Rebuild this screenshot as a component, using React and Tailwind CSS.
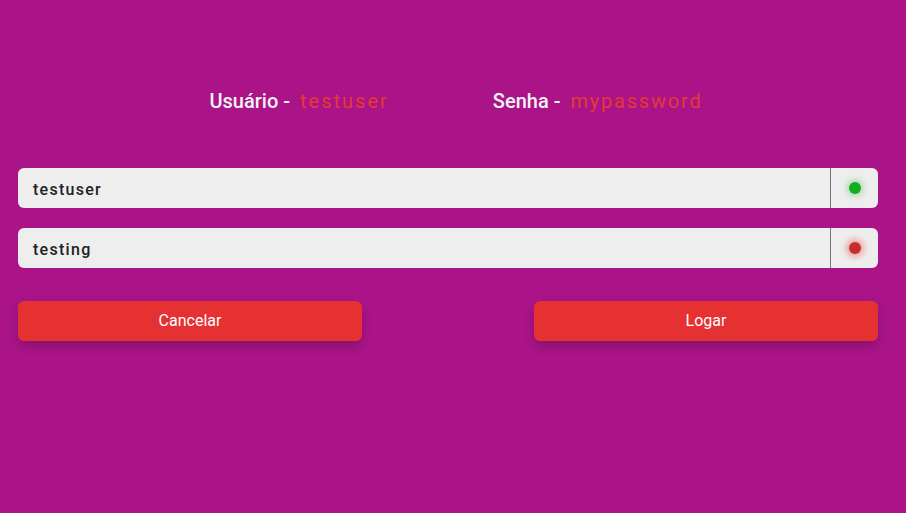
export default function App() {
    const font = { fontFamily: "Roboto, 'Liberation Sans', sans-serif" };

    return (
        <div className="min-h-[513px] w-full bg-[#aa1488] pt-[86px]" style={font}>
            {/* Credentials hint */}
            <div className="flex justify-center gap-[104px] pl-[6px] text-[20px] leading-[30px]">
                <div className="flex items-center gap-[10px]">
                    <span className="font-medium text-[#f3f3f3]">Usuário -</span>
                    <span className="tracking-[0.1em] text-[#e53935]">testuser</span>
                </div>
                <div className="flex items-center gap-[10px]">
                    <span className="font-medium text-[#f3f3f3]">Senha -</span>
                    <span className="tracking-[0.09em] text-[#e53935]">mypassword</span>
                </div>
            </div>

            <div className="pl-[18px] pr-[28px]">
                {/* Fields */}
                <div className="mt-[52px] flex flex-col gap-5">
                    <div className="flex h-10 rounded-md bg-[#eeeeee]">
                        <div className="flex flex-1 items-center px-[15px] pt-[3px] text-base font-medium tracking-[0.08em] text-[#222222]">
                            testuser
                        </div>
                        <div className="flex w-12 items-center justify-center border-l border-[#777777]">
                            <span className="h-3 w-3 rounded-full bg-[#14ad1f] shadow-[0_0_6px_2px_rgba(20,173,31,0.35)]"></span>
                        </div>
                    </div>
                    <div className="flex h-10 rounded-md bg-[#eeeeee]">
                        <div className="flex flex-1 items-center px-[15px] pt-[3px] text-base font-medium tracking-[0.08em] text-[#222222]">
                            testing
                        </div>
                        <div className="flex w-12 items-center justify-center border-l border-[#777777]">
                            <span className="h-3 w-3 rounded-full bg-[#c62e2e] shadow-[0_0_6px_3px_rgba(240,60,60,0.45)]"></span>
                        </div>
                    </div>
                </div>

                {/* Actions */}
                <div className="mt-[33px] flex justify-between">
                    <button className="h-10 w-[344px] rounded-md bg-[#e53131] text-base text-white shadow-[0_6px_12px_rgba(0,0,0,0.18)]">
                        Cancelar
                    </button>
                    <button className="h-10 w-[344px] rounded-md bg-[#e53131] text-base text-white shadow-[0_6px_12px_rgba(0,0,0,0.18)]">
                        Logar
                    </button>
                </div>
            </div>
        </div>
    );
}
